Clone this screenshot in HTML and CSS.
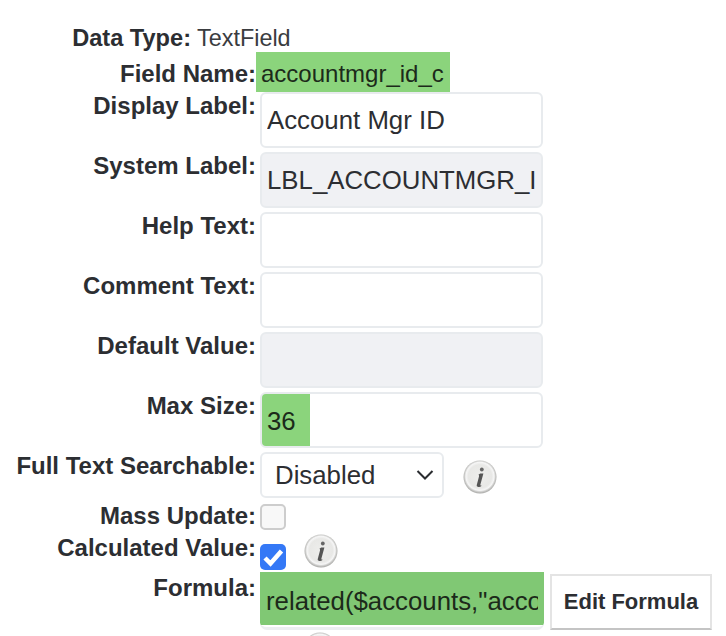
FILE: index.html
```html
<!DOCTYPE html>
<html lang="en">
<head>
  <meta charset="UTF-8">
  <title>Edit Field</title>
  <link rel="stylesheet" href="styles.css">
</head>
<body>

<svg class="defs" width="0" height="0">
  <defs>
    <radialGradient id="infoFill" cx="50%" cy="48%" r="52%">
      <stop offset="0%" stop-color="#eeeeec"/>
      <stop offset="68%" stop-color="#e8e8e6"/>
      <stop offset="82%" stop-color="#f6f6f6"/>
      <stop offset="91%" stop-color="#c8c8c6"/>
      <stop offset="100%" stop-color="#a8a8a6"/>
    </radialGradient>
    <symbol id="info" viewBox="0 0 34 34">
      <circle cx="17" cy="17" r="16.5" fill="url(#infoFill)"/>
      <circle cx="18.800" cy="9.500" r="1.900" fill="#666"/>
      <path d="M17.200 13.500h3.200l-3 11c-.2.8-.1 1.100.8.700l.2.700c-1.200 1.100-4.600 1.800-4.700-.3 0-.4.1-.8.2-1.100l2.100-7.900c.2-.9 0-1.600-.6-1.800z" fill="#555"/>
    </symbol>
  </defs>
</svg>

<div class="form">
  <div class="row row-type">
    <div class="label label-short">Data Type:</div>
    <div class="plain">TextField</div>
  </div>
  <div class="row row-name">
    <div class="label">Field Name:</div>
    <div class="name-value">accountmgr_id_c</div>
  </div>
  <div class="row">
    <div class="label">Display Label:</div>
    <input class="field" type="text" value="Account Mgr ID">
  </div>
  <div class="row">
    <div class="label">System Label:</div>
    <input class="field disabled" type="text" value="LBL_ACCOUNTMGR_ID" disabled>
  </div>
  <div class="row">
    <div class="label">Help Text:</div>
    <input class="field" type="text">
  </div>
  <div class="row">
    <div class="label">Comment Text:</div>
    <input class="field" type="text">
  </div>
  <div class="row">
    <div class="label">Default Value:</div>
    <input class="field disabled" type="text" disabled>
  </div>
  <div class="row">
    <div class="label">Max Size:</div>
    <input class="field size-changed" type="text" value="36">
  </div>
  <div class="row row-select">
    <div class="label">Full Text Searchable:</div>
    <div class="select">
      <span>Disabled</span>
      <svg width="18" height="10" viewBox="0 0 18 10"><path d="M1.500 1l7.500 7.500L16.500 1" fill="none" stroke="#2a2c30" stroke-width="2"/></svg>
    </div>
    <svg class="info"><use href="#info"/></svg>
  </div>
  <div class="row row-mass">
    <div class="label">Mass Update:</div>
    <div class="check"></div>
  </div>
  <div class="row row-calc">
    <div class="label">Calculated Value:</div>
    <div class="check checked">
      <svg width="26" height="26" viewBox="0 0 26 26"><path d="M5 14l5.500 5.500L21.500 7" fill="none" stroke="#fff" stroke-width="4.500"/></svg>
    </div>
    <svg class="info"><use href="#info"/></svg>
  </div>
  <div class="row row-formula">
    <div class="label">Formula:</div>
    <input class="field formula" type="text" value='related($accounts,"accountmgr_id_c")'>
    <button class="btn">Edit Formula</button>
  </div>
  <div class="row row-last">
    <div class="label"></div>
    <svg class="info"><use href="#info"/></svg>
  </div>
</div>

</body>
</html>
```

FILE: styles.css
```css
html, body {
  margin: 0;
  padding: 0;
  height: 100%;
  overflow: hidden;
  background-color: #fff;
}
body {
  font-family: "Liberation Sans", Arial, sans-serif;
  font-size: 23px;
  color: #2c2e32;
}
.defs {
  position: absolute;
}
.form {
  box-sizing: border-box;
  height: 636px;
  padding-top: 24px;
  overflow: hidden;
}
.row {
  display: flex;
  align-items: flex-start;
  margin-bottom: 4px;
}
.label {
  width: 256px;
  flex: none;
  text-align: right;
  font-weight: bold;
  font-size: 24px;
  line-height: 28px;
}
.label-short {
  width: 191px;
  font-size: 23.600px;
}
.plain {
  margin-left: 6px;
  font-size: 23.400px;
  line-height: 28px;
  color: #3a3c40;
}
.row-type, .row-name {
  margin-bottom: 0;
}
.row-name .label {
  padding-top: 8px;
}
.name-value {
  width: 194px;
  height: 40px;
  box-sizing: border-box;
  padding-left: 5px;
  padding-top: 2px;
  font-size: 24px;
  line-height: 40px;
  background-color: #8bd47c;
  color: #1c2a1a;
}
.field {
  display: block;
  box-sizing: border-box;
  width: 283px;
  height: 56px;
  margin: 0 0 0 4px;
  padding: 0 6px 0 5px;
  border: 2px solid #e8ebee;
  border-radius: 6px;
  background-color: #fff;
  font-family: inherit;
  font-size: 25.800px;
  color: #2c2e32;
  outline: none;
}
.disabled {
  background-color: #f0f1f4;
  opacity: 1;
}
.size-changed {
  padding-top: 3px;
  background: linear-gradient(90deg, #8bd47c 48px, #fff 48px);
  background-color: #fff;
  color: #1c2a1a;
}
.row-select {
  height: 46px;
}
.select {
  display: flex;
  align-items: center;
  justify-content: space-between;
  box-sizing: border-box;
  width: 184px;
  height: 46px;
  margin-left: 4px;
  padding: 0 8px 0 13px;
  border: 2px solid #e8ebee;
  border-radius: 6px;
  font-size: 25.800px;
}
.info {
  flex: none;
  width: 34px;
  height: 34px;
}
.row-select .info {
  margin: 8px 0 0 19px;
}
.row-mass {
  height: 28px;
}
.check {
  box-sizing: border-box;
  width: 26px;
  height: 26px;
  margin: 2px 0 0 4px;
  border: 2px solid #cdcdcd;
  border-radius: 5px;
  background-color: #f8f8f8;
}
.check.checked {
  margin-top: 10px;
  border: 0;
  background-color: #3478f6;
}
.check svg {
  display: block;
}
.row-calc {
  height: 38px;
  margin-bottom: 0;
}
.row-calc .info {
  margin-left: 18px;
}
.row-formula {
  margin-bottom: 2px;
}
.row-formula .label {
  padding-top: 2px;
}
.formula {
  width: 284px;
  height: 58px;
  padding: 4px 6px 0;
  border-width: 0 0 3px;
  border-bottom-color: #eceef1;
  border-radius: 0 0 7px 7px;
  background: linear-gradient(180deg, #80c874 53px, #fff 53px) border-box;
  color: #1c2a1a;
}
.btn {
  box-sizing: border-box;
  width: 162px;
  height: 56px;
  margin: 2px 0 0 6px;
  padding: 0;
  border: 2px solid #e4e4e4;
  border-bottom-color: #c4c4c4;
  background-color: #fff;
  font-family: inherit;
  font-size: 22px;
  font-weight: bold;
  color: #2c2e32;
}
.row-last .info {
  margin-left: 47px;
}
```
